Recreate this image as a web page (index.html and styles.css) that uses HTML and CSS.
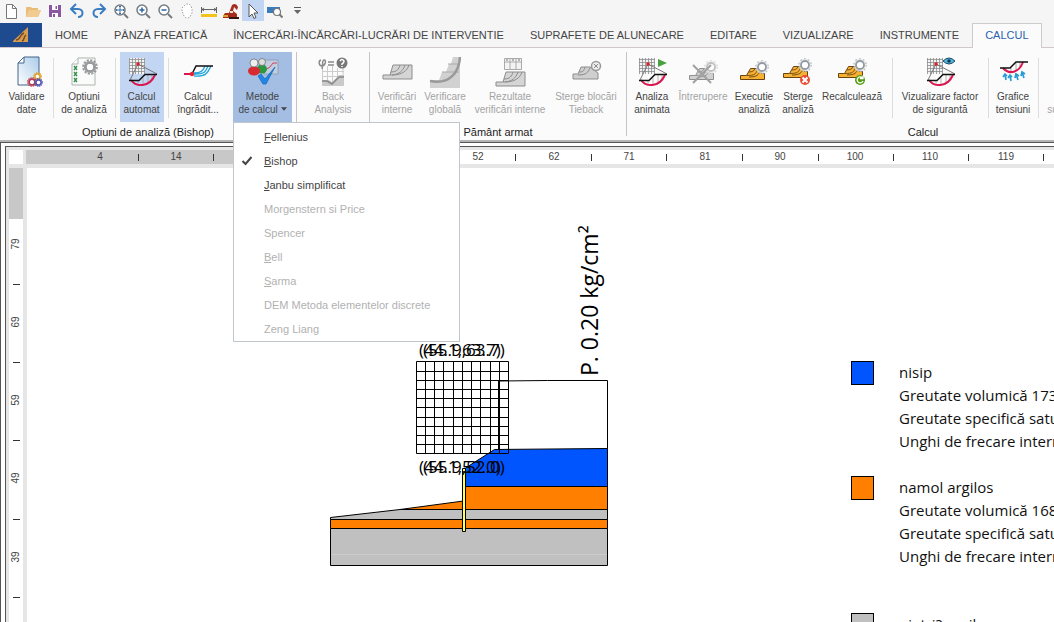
FILE: index.html
```
<!DOCTYPE html>
<html lang="ro">
<head>
<meta charset="utf-8">
<title>Analiza stabilității</title>
<link rel="stylesheet" href="styles.css">
</head>
<body>
<svg class="defs" aria-hidden="true">
  <defs>
    <linearGradient id="sheet" x1="0" x2="1" y1="1" y2="0"><stop offset="0" stop-color="#fff"/><stop offset="1" stop-color="#a9cbe9"/></linearGradient>
    <pattern id="mesh" width="3" height="3" patternUnits="userSpaceOnUse"><rect width="3" height="3" fill="#f4f4f4"/><path d="M0 .5H3M.5 0V3" stroke="#8d8d8d" stroke-width=".8"/></pattern>
    <symbol id="gear" viewBox="0 0 16 16"><circle cx="8" cy="8" r="6.8" fill="none" stroke="currentColor" stroke-width="2" stroke-dasharray="2.2 1.36"/><circle cx="8" cy="8" r="4.6" fill="none" stroke="currentColor" stroke-width="3"/><circle cx="8" cy="8" r="3" fill="#fff"/></symbol>
    <symbol id="slip" viewBox="0 0 32 32"><rect x="3" y="2" width="16" height="16" fill="url(#mesh)"/><path d="M12 8 4 24M12 8l19 10" stroke="#777" fill="none"/><circle cx="12" cy="8" r="1.8" fill="#d3222b"/><path d="M12 24v5M17 22v7M22 19v7M26 19v4" stroke="#999" stroke-width=".7"/><path d="M5 24c5 7 18 8 24-5" fill="none" stroke="#dc1650" stroke-width="2"/><path d="M3 24.500h10l6-6h12" fill="none" stroke="#111" stroke-width="1.500"/></symbol>
    <symbol id="berm" viewBox="0 0 32 32"><path d="M2 21h7l3-10h19v14H2z" fill="#d5d5d5" stroke="#8d8d8d"/><path d="M9 21c9 0 13-4 15-10M10 18c6 0 8-3 9-7M11 21c10 0 15-4 17-10" fill="none" stroke="#8d8d8d"/></symbol>
    <symbol id="terrain" viewBox="0 0 32 32"><path d="M2.500 19.500h6l4-7h8l3 5h3v6h-24z" fill="#f5b133" stroke="#6b4310"/><path d="M9 19.500c8 0 9-2 10-5M11 16c3 0 5-1 6-3M11 21c9 0 9-3 11-5" fill="none" stroke="#6b4310" stroke-width=".9"/><circle cx="24" cy="11" r="6.500" fill="#e3e6e8" opacity=".7"/><circle cx="24" cy="11" r="6.300" fill="none" stroke="#b7bdc2" stroke-width="1.200" stroke-dasharray="1.500 2.500"/><circle cx="24" cy="11" r="4" fill="#fff" stroke="#929ba3" stroke-width="1.800"/></symbol>
    <symbol id="lens" viewBox="0 0 16 16"><circle cx="7" cy="7" r="5" fill="#fff" stroke="#737b83" stroke-width="1.500"/><path d="m11 11 4 4" stroke="#737b83" stroke-width="2"/></symbol>
  </defs>
</svg>

<div class="quickbar" role="toolbar" aria-label="Acces rapid">
  <button aria-label="Nou"><svg viewBox="0 0 16 16"><path d="M3.500 1.500h6l4 4v10h-10z" fill="#fff" stroke="#777"/><path d="M9.500 1.500v4h4" fill="none" stroke="#777"/></svg></button>
  <button aria-label="Deschide"><svg viewBox="0 0 16 16"><path d="M1 14V4h5l1 1h6v2h3l-3 7z" fill="#e8bd78"/><path d="m1 14 3-7h12l-3 7z" fill="#f1cc91"/></svg></button>
  <button aria-label="Salvare"><svg viewBox="0 0 16 16"><path d="M2 2h12v12H2z" fill="#8b57a5"/><path d="M5 2h6v5H5zM5 10h6v4H5z" fill="#fff"/><path d="M8.500 3h1.500v3H8.500zM6 11h2v3H6z" fill="#8b57a5"/></svg></button>
  <button aria-label="Anulare"><svg viewBox="0 0 16 16"><path d="M3 6h6c6 0 6 8 0 8" fill="none" stroke="#3a7dc0" stroke-width="2"/><path d="m7 1-5 5 5 5" fill="none" stroke="#3a7dc0" stroke-width="2"/></svg></button>
  <button aria-label="Refacere"><svg viewBox="0 0 16 16"><path d="M13 6H7c-6 0-6 8 0 8" fill="none" stroke="#3a7dc0" stroke-width="2"/><path d="m9 1 5 5-5 5" fill="none" stroke="#3a7dc0" stroke-width="2"/></svg></button>
  <button aria-label="Încadrare"><svg viewBox="0 0 16 16"><use href="#lens"/><path d="M7 3v8M3 7h8M6 4l1-1 1 1M6 10l1 1 1-1M4 6 3 7l1 1M10 6l1 1-1 1" stroke="#3a6ea5" fill="none"/></svg></button>
  <button aria-label="Mărire"><svg viewBox="0 0 16 16"><use href="#lens"/><path d="M7 4.500v5M4.500 7h5" stroke="#2c65a8" stroke-width="1.500"/></svg></button>
  <button aria-label="Micșorare"><svg viewBox="0 0 16 16"><use href="#lens"/><path d="M4.500 7h5" stroke="#2c65a8" stroke-width="1.500"/></svg></button>
  <button aria-label="Deplasare"><svg viewBox="0 0 16 16"><path d="M3 8V5l2-2 2-2h3l2 2 1 3v4l-2 4-2 1H7l-2-2z" fill="#fff" stroke="#888" stroke-width=".8" stroke-dasharray="1.500 1.500"/></svg></button>
  <button aria-label="Cotă"><svg viewBox="0 0 16 16"><path d="M0 11h16v3H0z" fill="#f2c318"/><path d="M.5 4v6M15.500 4v6M1 6.500h14M3 5 1 6.500 3 8M13 5l2 1.500L13 8" fill="none" stroke="#555" stroke-width=".9"/></svg></button>
  <button aria-label="Utilaj"><svg viewBox="0 0 16 16"><path d="m0 13 2-3h4l3-8q4-3 6 2l-1 3-3-3-1 4 4 3v4H0z" fill="#a52b1c"/><path d="M7 8h3v2H7z" fill="#f3d9c9"/><path d="M0 12h5v2H0z" fill="#dca130"/><path d="M6 15h10" stroke="#331610" stroke-width="2"/></svg></button>
  <button class="chosen" aria-label="Selectare"><svg viewBox="0 0 16 16"><path d="m4 1 9 9H9l2 4.500-2 1L7 11l-3 3z" fill="#fff" stroke="#555"/></svg></button>
  <button aria-label="Previzualizare"><svg viewBox="0 0 16 16"><path d="M0 4h13v4H6v2H0z" fill="#3b7dba"/><circle cx="10" cy="9" r="3.500" fill="#fff" stroke="#777" stroke-width="1.200"/><path d="m12.500 11.500 3 3" stroke="#777" stroke-width="2"/></svg></button>
  <button aria-label="Personalizare"><svg viewBox="0 0 16 16"><path d="M5 4.500h7" stroke="#555"/><path d="M5 7h7l-3.500 4z" fill="#666"/></svg></button>
</div>

<nav class="tabs">
  <button class="app" aria-label="Aplicație"><svg viewBox="0 0 18 18"><path d="M1 15 16 1v15H1z" fill="#d79b50"/><path d="M4 14c5 0 3-5 8-7M10 15c3-1 1-4 4-6" fill="none" stroke="#744b22" stroke-width="1.500"/></svg></button>
  <a href="#home">HOME</a>
  <a href="#panza">PÂNZĂ FREATICĂ</a>
  <a href="#incercari">ÎNCERCĂRI-ÎNCĂRCĂRI-LUCRĂRI DE INTERVENTIE</a>
  <a href="#suprafete">SUPRAFETE DE ALUNECARE</a>
  <a href="#editare">EDITARE</a>
  <a href="#vizualizare">VIZUALIZARE</a>
  <a href="#instrumente">INSTRUMENTE</a>
  <a class="active" href="#calcul" aria-current="page">CALCUL</a>
</nav>

<div class="ribbon">
  <section class="group options">
    <div class="tools">
      <button class="tool w53"><svg viewBox="0 0 32 32"><path d="M13 1h15v28H7V7z" fill="url(#sheet)" stroke="#42658a"/><path d="M13 1v6H7z" fill="#fff" stroke="#42658a"/><use href="#gear" x="22" y="16" width="9" height="9" color="#dfa52b"/><use href="#gear" x="16" y="21" width="10" height="10" color="#bd3a4c"/><use href="#gear" x="23" y="22" width="9" height="9" color="#5658b4"/></svg><span>Validare<br>date</span></button>
      <button class="tool w62 split"><svg viewBox="0 0 32 32"><path d="M10 2h17v27H4V8z" fill="#fafbfa" stroke="#adb5ad"/><path d="M10 2v6H4" fill="#fff" stroke="#adb5ad"/><path d="m6 10 3 4m0-4-3 4m0 2 3 4m0-4-3 4m0 2 3 4m0-4-3 4" stroke="#2e9148" stroke-width="1.300"/><use href="#gear" x="14" y="3" width="16" height="16" color="#999c9e"/></svg><span>Optiuni<br>de analiză</span></button>
      <button class="tool w53 split"><span class="pressed"><svg viewBox="0 0 32 32"><use href="#slip"/></svg><span>Calcul<br>automat</span></span></button>
      <button class="tool w60 split roomy"><svg viewBox="0 0 32 32"><path d="M12 17c7 0 9-2 11-7M12 18c12 1 12-4 14-8M12 20c13 1 14-4 17-10" fill="none" stroke="#24a6dc" stroke-width="1.300"/><path d="M2 18h9" stroke="#dc1650" stroke-width="2"/><path d="m10 18 4-8h17" fill="none" stroke="#111" stroke-width="1.500"/><circle cx="10" cy="18" r="2.200" fill="#e32636"/></svg><span>Calcul<br>îngrădit...</span></button>
      <div class="dropdown">
        <button class="tool w59 open" aria-haspopup="true" aria-expanded="true"><svg viewBox="0 0 32 32"><path d="M17 4h14v14H17z" fill="#c2cee0" stroke="#8292a8" stroke-width=".7"/><path d="m18 14 5-3 3-4h4" fill="none" stroke="#d14068"/><ellipse cx="15" cy="13" rx="5" ry="4.500" fill="#299840"/><circle cx="15" cy="6" r="3.500" fill="#ddd" stroke="#666" stroke-width=".7"/><ellipse cx="7" cy="15" rx="6" ry="4.500" fill="#d82930"/><circle cx="7" cy="7" r="4" fill="#eee" stroke="#666" stroke-width=".7"/><path d="m11 20 3-2 4 5 10-12-9 17h-3z" fill="#2186e5" stroke="#1264b4" stroke-width=".7"/></svg><span>Metode<br>de calcul <svg class="caret" viewBox="0 0 7 4"><path d="M0 0h7L3.500 4z" fill="currentColor"/></svg></span></button>
        <div class="menu" role="menu">
          <button role="menuitem"><u>F</u>ellenius</button>
          <button role="menuitem" class="checked"><svg viewBox="0 0 12 10"><path d="m1.500 5 3 3 6-7" fill="none" stroke="#444" stroke-width="2"/></svg><u>B</u>ishop</button>
          <button role="menuitem"><u>J</u>anbu simplificat</button>
          <button role="menuitem" disabled>Morgenstern si Price</button>
          <button role="menuitem" disabled>Spencer</button>
          <button role="menuitem" disabled><u>B</u>ell</button>
          <button role="menuitem" disabled><u>S</u>arma</button>
          <button role="menuitem" disabled>DEM Metoda elementelor discrete</button>
          <button role="menuitem" disabled>Zeng Liang</button>
        </div>
      </div>
    </div>
    <h2>Optiuni de analiză (Bishop)</h2>
  </section>

  <section class="group back">
    <div class="tools">
      <button class="tool w72" disabled><svg viewBox="0 0 32 32"><path d="M5.500 10v20M10.500 10v20M15.500 10v20M20.500 12v18M26 12v18M5 15.500h22M5 20.500h22" stroke="#ccc"/><path d="M5 24h7l3 2 7-7h5v11H5z" fill="#cacaca"/><path d="M5 25h5l5 3 7-7h5" fill="none" stroke="#888" stroke-width="1.500"/><path d="M4 4C1 5 2 10 5 10s5-6 2-6c-2 0-1 4-2 9M11 6h6M11 9h6" fill="none" stroke="#8a8a8a" stroke-width="1.500"/><circle cx="25" cy="7" r="5.500" fill="#777"/><path d="M23 5q2-3 4 0 0 2-2 3v1m0 1v1" fill="none" stroke="#fff" stroke-width="1.500"/></svg><span>Back<br>Analysis</span></button>
    </div>
  </section>

  <section class="group reinforced">
    <div class="tools">
      <button class="tool w48 edge" disabled><svg viewBox="0 0 32 32"><use href="#berm" y="-2"/></svg><span>Verificări<br>interne</span></button>
      <button class="tool w48" disabled><svg viewBox="0 0 32 32"><path d="M1 24h9l3-8h4l3-8h2l2-7h7v31H1z" fill="#d1d1d1"/><path d="M13 16h17M19 8h11" stroke="#aaa"/><path d="M1 25c20 4 29-9 30-24" fill="none" stroke="#999" stroke-width="2.500"/></svg><span>Verificare<br>globală</span></button>
      <button class="tool w82" disabled><svg viewBox="0 0 32 32"><path d="M10.500 2.500h17v11h-17zM16 2v11M22 2v11M10 6h18" fill="#f3f3f3" stroke="#aaa"/><path d="M12 4h2m4 0h2m4 0h2" stroke="#777"/><use href="#berm" y="5"/></svg><span>Rezultate<br>verificări interne</span></button>
      <button class="tool w70" disabled><svg viewBox="0 0 32 32"><path d="M3 18h5l3-7h9l8 6v6H3z" fill="#cfcfcf" stroke="#8d8d8d"/><path d="M8 19c9 0 10-3 12-7M9 16c4 0 5-1 6-5" fill="none" stroke="#888"/><circle cx="26" cy="10" r="4.500" fill="#eee" stroke="#999" stroke-width="1.500"/><path d="m24 8 4 4m0-4-4 4" stroke="#888"/></svg><span>Sterge blocări<br>Tieback</span></button>
    </div>
    <h2>Pământ armat</h2>
  </section>

  <section class="group compute">
    <div class="tools">
      <button class="tool w50"><svg viewBox="0 0 32 32"><use href="#slip"/><path d="m22 3 9 4-9 4z" fill="#48a13f"/></svg><span>Analiza<br>animata</span></button>
      <button class="tool w52" disabled><svg class="gray" viewBox="0 0 32 32"><use href="#terrain"/><path d="m6 9 18 18M24 9 6 27" stroke="#666" stroke-width="2"/></svg><span>Întrerupere</span></button>
      <button class="tool w50"><svg viewBox="0 0 32 32"><use href="#terrain"/></svg><span>Executie<br>analiză</span></button>
      <button class="tool w38"><svg viewBox="0 0 32 32"><use href="#terrain" x="-1" y="-2"/><circle cx="23" cy="24" r="5" fill="#e94e35"/><path d="m20.500 21.500 5 5m0-5-5 5" stroke="#fff" stroke-width="2"/></svg><span>Sterge<br>analiză</span></button>
      <button class="tool w70 roomy"><svg viewBox="0 0 32 32"><use href="#terrain" y="-2"/><circle cx="24" cy="24" r="5" fill="#549c12"/><path d="M26.500 22a3 3 0 1 0 .5 3M27 19.500v3h-3" fill="none" stroke="#fff" stroke-width="1.300"/></svg><span>Recalculează</span></button>
      <button class="tool w96 split"><svg viewBox="0 0 32 32"><use href="#slip"/><path d="M19 5q6-6 12 0-6 6-12 0z" fill="#52b8e2" stroke="#174a68"/><circle cx="25" cy="5" r="1.800" fill="#17384b"/></svg><span>Vizualizare factor<br>de sigurantă</span></button>
      <button class="tool w50 split"><svg viewBox="0 0 32 32"><path d="M9 12v3m5-3v4m5-9v8m4-8v5" stroke="#aaa"/><path d="M6 12c6 7 16 5 20-6" fill="none" stroke="#dc1650" stroke-width="2"/><path d="M3 12h10l6-6h12" fill="none" stroke="#111" stroke-width="1.500"/><path d="m9 24-1-6m-2 3 2-3 2 2m4 5-1-6m-2 3 2-3 2 2m6 3-2-6m-1 4 1-4 3 2m5 2-2-6m-1 4 1-4 3 2" fill="none" stroke="#259dd4" stroke-width="1.700"/></svg><span>Grafice<br>tensiuni</span></button>
      <button class="tool w60 split" disabled><svg viewBox="0 0 32 32"></svg><span><br>suprafete</span></button>
    </div>
    <h2>Calcul</h2>
  </section>
</div>

<main class="workspace">
  <div class="frame">
    <div class="corner"></div>
    <svg class="ruler-x">
      <rect width="300" height="14" fill="#c8c8c8"/>
      <g class="ruler-text"><text x="74" y="10">4</text><text x="150" y="10">14</text><text x="452" y="10">52</text><text x="528" y="10">62</text><text x="603" y="10">71</text><text x="679" y="10">81</text><text x="754" y="10">90</text><text x="829" y="10">100</text><text x="904" y="10">110</text><text x="980" y="10">119</text></g>
      <path d="M112.500 4v7M187.500 4v7M489.500 4v7M565.500 4v7M640.500 4v7M716.500 4v7M792.500 4v7M867.500 4v7M942.500 4v7M1017.500 4v7" stroke="#333"/>
    </svg>
    <svg class="ruler-y">
      <rect width="14" height="51" fill="#c8c8c8"/>
      <g class="ruler-text"><text transform="translate(10 76) rotate(-90)">79</text><text transform="translate(10 154) rotate(-90)">69</text><text transform="translate(10 232) rotate(-90)">59</text><text transform="translate(10 310) rotate(-90)">49</text><text transform="translate(10 389) rotate(-90)">39</text></g>
      <path d="M4 116.500h7M4 194.500h7M4 272.500h7M4 351.500h7M4 429.500h7" stroke="#333"/>
    </svg>
    <div class="canvas">
      <svg class="section" width="600" height="454" viewBox="27 168 600 454">
        <g stroke="#000">
          <path d="M330.500 517.500 400 509.500h207.500v10h-277z" fill="#c0c0c0"/>
          <path d="M400 509.500 463.500 501v8.500zM465.500 486.500h142v23h-142z" fill="#ff8000"/>
          <path d="M330.500 519.500h277v9h-277z" fill="#ff8000"/>
          <path d="M330.500 528.500h277v37h-277z" fill="#c0c0c0"/>
          <path d="M465.500 486.500V468l29-18.500 113-1v38z" fill="#0055ff"/>
          <path d="M499.500 450v-69l48-.5h60v68" fill="none"/>
          <path d="M499 381v69" stroke-width="2"/>
          <path d="M331 554.500h276" stroke="#ccc"/>
          <path d="M416.500 361.500h92v92h-92zM425.500 361v92M434.500 361v92M443.500 361v92M453.500 361v92M462.500 361v92M471.500 361v92M480.500 361v92M490.500 361v92M499.500 361v92M416 371.500h92M416 380.500h92M416 389.500h92M416 398.500h92M416 407.500h92M416 417.500h92M416 426.500h92M416 435.500h92M416 444.500h92" fill="none"/>
          <path d="M462.500 468.500h3v63h-3z" fill="#ffff55"/>
        </g>
        <g class="coords"><text x="419" y="356">(44.1,63.7)</text><text x="423" y="356">(55.9,63.7)</text><text x="419" y="473">(44.1,52.0)</text><text x="423" y="473">(55.9,52.0)</text></g>
        <text class="load" transform="translate(598 376) rotate(-90)">P. 0.20 kg/cm²</text>
      </svg>
      <ul class="legend">
        <li><i class="swatch sand"></i><p>nisip<br>Greutate volumică 1730<br>Greutate specifică saturată<br>Unghi de frecare intern</p></li>
        <li><i class="swatch silt"></i><p>namol argilos<br>Greutate volumică 1680<br>Greutate specifică saturată<br>Unghi de frecare intern</p></li>
        <li class="spaced"><i class="swatch gravel"></i><p>pietri? argilos</p></li>
      </ul>
    </div>
  </div>
</main>
</body>
</html>
```

FILE: styles.css
```
* { box-sizing: border-box; }
body {
  margin: 0;
  height: 100vh;
  overflow: hidden;
  display: flex;
  flex-direction: column;
  background: #f5f5f5;
  color: #444;
  font-family: "Liberation Sans", Arial, sans-serif;
  font-size: 11px;
}
button {
  margin: 0;
  padding: 0;
  border: 0;
  background: none;
  color: inherit;
  font: inherit;
}
.defs { position: absolute; width: 0; height: 0; }

.quickbar { display: flex; height: 23px; flex: none; }
.quickbar button { width: 22px; height: 21px; display: grid; place-items: center; }
.quickbar svg { width: 16px; height: 16px; }
.quickbar .chosen { background: #c2d5f2; }

.tabs {
  display: flex;
  flex: none;
  height: 25px;
  border-bottom: 1px solid #d0c8c8;
  white-space: nowrap;
}
.tabs .app { width: 42px; height: 24px; flex: none; background: #1e4b8f; display: grid; place-items: center; }
.tabs .app svg { width: 18px; height: 18px; }
.tabs a { padding: 0 13px; line-height: 25px; color: #444; text-decoration: none; }
.tabs .active {
  padding: 0 12px;
  line-height: 23px;
  color: #2a62ad;
  background: #fbfbfb;
  border: 1px solid #ccc;
  border-bottom: 0;
  height: 25px;
}

.ribbon {
  display: flex;
  flex: none;
  height: 94px;
  padding-top: 4px;
  background: #fbfbfb;
  border-bottom: 2px solid #b5b5b5;
}
.group { flex: none; display: flex; flex-direction: column; height: 84px; }
.group + .group { border-left: 1px solid #c4c4c4; }
.options { width: 296px; }
.back { width: 73px; }
.reinforced { width: 257px; }
.compute { flex: 1; min-width: 0; overflow: hidden; }
.compute h2 { width: 592px; }
.group h2 {
  margin: 3px 0 0;
  font-size: 11px;
  font-weight: 400;
  line-height: 14px;
  color: #222;
  text-align: center;
}
.tools { display: flex; height: 70px; }
.tool {
  flex: none;
  height: 70px;
  padding-top: 4px;
  display: flex;
  flex-direction: column;
  align-items: center;
  gap: 2px;
  font-size: 10px;
  line-height: 13px;
  text-align: center;
  white-space: nowrap;
}
.tool svg { width: 32px; height: 32px; flex: none; }
.tool:disabled { color: #a3a3a3; }
.tool .caret { width: 6px; height: 4px; vertical-align: 2px; }
.tool .gray { filter: grayscale(1); opacity: .6; }
.split { background: linear-gradient(#ddd, #ddd) 0 6px / 1px 60px no-repeat; }
.pressed {
  height: 70px;
  width: 44px;
  margin-top: -4px;
  padding-top: 4px;
  display: flex;
  flex-direction: column;
  align-items: center;
  gap: 2px;
  background: #c2d5f2;
}
.open { background: #a3bde3; }
.roomy { margin-right: 5px; }
.w38 { width: 38px; }
.w48 { width: 48px; }
.w50 { width: 50px; }
.w52 { width: 52px; }
.w53 { width: 53px; }
.w59 { width: 59px; }
.w60 { width: 60px; }
.w62 { width: 62px; }
.w70 { width: 70px; }
.w72 { width: 72px; }
.w82 { width: 82px; }
.w96 { width: 96px; }
.edge { margin-left: 3px; }

.dropdown { position: relative; }
.menu {
  position: absolute;
  z-index: 5;
  top: 70px;
  left: 0;
  width: 227px;
  padding: 2px 0 0;
  background: #fff;
  border: 1px solid #c0c6ce;
}
.menu button {
  display: flex;
  align-items: center;
  width: 100%;
  height: 24px;
  padding-left: 30px;
  text-align: left;
}
.menu button:disabled { color: #b1b1b1; }
.menu svg { width: 12px; height: 10px; margin: 0 11px 0 -23px; }

.workspace {
  flex: 1;
  min-height: 0;
  padding: 3px 0 0 4px;
  background: #fff;
  border-top: 1px solid #555;
  border-left: 1px solid #555;
}
.frame {
  height: 100%;
  display: grid;
  grid-template: 14px minmax(0, 1fr) / 14px minmax(0, 1fr);
  gap: 4px 3px;
  padding: 3px 0 0 3px;
  background: #e6e6e6;
  border-top: 1px solid #555;
  border-left: 1px solid #555;
  overflow: hidden;
}
.corner { background: #fff; }
.ruler-x, .ruler-y { width: 100%; height: 100%; background: #fff; }
.ruler-text { font-size: 10px; fill: #444; text-anchor: middle; }
.canvas { display: flex; margin-left: 1px; background: #fff; overflow: hidden; }
.section { flex: none; }
.coords { font: 17px "Open Sans", sans-serif; }
.load { font: 23px "Open Sans", sans-serif; }
.legend {
  flex: 1;
  margin: 0;
  padding: 193px 0 0 224px;
  list-style: none;
  font: 15px/23px "Open Sans", sans-serif;
  color: #111;
  white-space: nowrap;
}
.legend li { display: flex; gap: 25px; margin-bottom: 23px; }
.legend .spaced { margin-top: 45px; }
.legend p { margin: 0; }
.swatch { flex: none; width: 23px; height: 24px; border: 1px solid #000; }
.sand { background: #0055ff; }
.silt { background: #ff8000; }
.gravel { background: #c0c0c0; }
```
